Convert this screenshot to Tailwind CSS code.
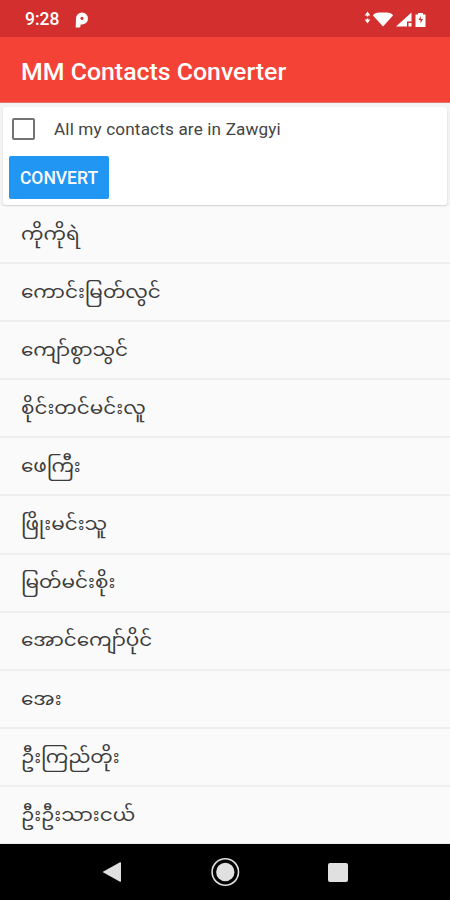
<!DOCTYPE html>
<html lang="my">
<head>
  <meta charset="UTF-8">
  <meta name="viewport" content="width=device-width, initial-scale=1.0">
  <title>MM Contacts Converter</title>
  <script src="https://cdn.jsdelivr.net/npm/@tailwindcss/browser@4"></script>
</head>
<body class="bg-[#fafafa] h-[900px] flex flex-col overflow-hidden font-['Roboto','Noto_Sans_Myanmar','Noto_Sans',sans-serif]">
  <!-- status bar -->
  <div class="h-[37px] shrink-0 bg-[#d32f2f] flex items-center pl-[25px] pr-[23px] text-white">
    <span class="text-[17.5px] font-medium leading-none pt-[3px]">9:28</span>
    <svg class="ml-[16px] mt-[2px]" width="14" height="16" viewBox="0 0 14 16">
      <path fill="#fff" fill-rule="evenodd" d="M1 6.500A6 6 0 0 1 7 .5a6 6 0 0 1 0 12H5.500V14a1.500 1.500 0 0 1-1.500 1.500H.7zM7 4.700a1.600 1.600 0 1 0 0 3.200 1.600 1.600 0 0 0 0-3.200z"/>
    </svg>
    <svg class="ml-auto mt-px" width="64" height="18" viewBox="0 0 64 18">
      <g fill="#fff">
        <path d="M4.500 1.500l2.800 4H5.200v1H3.800v-1H1.700zM4.500 13.500l-2.800-4h2.100v-1h1.400v1h2.100z"/>
        <path d="M10 5.500C11 3 14 2.500 20 2.500s9 .5 10 3L20 16.500z"/>
        <path d="M48.500 2.500v9H44v5H33z"/>
        <path d="M45.500 13h3v3.500h-3z"/>
        <path fill-rule="evenodd" d="M52.500 4.500h2.500V3h5v1.500h2.500V17h-10zM57.800 6L55.500 10h2v3.500L60 9h-2.200z"/>
      </g>
    </svg>
  </div>

  <!-- app bar -->
  <div class="h-[66px] shrink-0 bg-[#f44336] border-b border-[#e57368] flex items-center pl-[21px] pt-[4px]">
    <h1 class="text-[24px] font-medium text-white leading-none origin-left scale-x-[1.036]">MM Contacts Converter</h1>
  </div>

  <!-- options card -->
  <div class="h-[103px] shrink-0 pt-[4px] pb-px px-[3px] bg-[#f4f4f4]">
    <div class="h-[98px] bg-white rounded-[3px] shadow-[0_1px_2px_rgba(0,0,0,0.15)] pl-[6px] pt-[10px]">
      <label class="flex items-center h-[23px] pl-[3px]">
        <span class="w-[23px] h-[22px] border-2 border-[#737373] rounded-[2px]"></span>
        <span class="ml-[19px] mt-[3px] text-[16.500px] tracking-[0.15px] text-[#444] leading-none origin-left scale-x-[1.038]">All my contacts are in Zawgyi</span>
      </label>
      <button class="mt-[16px] w-[100px] h-[43px] pt-[3px] bg-[#2196f3] rounded-[2px] text-white text-[17.5px] font-medium leading-none">CONVERT</button>
    </div>
  </div>

  <!-- contacts -->
  <ul class="flex-1 min-h-0 overflow-hidden text-[18.5px] text-[#3c3c3c] leading-none *:h-[58.1px] *:pl-[20.5px] *:flex *:items-center *:border-b-2 *:border-[#eeeeee] [&_span]:origin-left [&_span]:scale-x-[1.08]">
    <li><span>ကိုကိုရဲ</span></li>
    <li><span>ကောင်းမြတ်လွင်</span></li>
    <li><span>ကျော်စွာသွင်</span></li>
    <li><span>စိုင်းတင်မင်းလူ</span></li>
    <li><span>ဖေကြီး</span></li>
    <li><span>ဖြိုးမင်းသူ</span></li>
    <li><span>မြတ်မင်းစိုး</span></li>
    <li><span>အောင်ကျော်ပိုင်</span></li>
    <li><span>အေး</span></li>
    <li><span>ဦးကြည်တိုး</span></li>
    <li><span>ဦးဦးသားငယ်</span></li>
  </ul>

  <!-- navigation bar -->
  <div class="h-[56px] shrink-0 bg-black grid grid-cols-[1fr_30px_1fr] items-center text-[#e0e0e0]">
    <svg class="ml-[102px]" width="20" height="22" viewBox="0 0 20 22"><path fill="currentColor" d="M.5 11L18 1.300a.8.8 0 0 1 1 .8v17.800a.8.8 0 0 1-1 .8z"/></svg>
    <svg width="30" height="30" viewBox="0 0 30 30">
      <circle cx="15.300" cy="15" r="9.200" fill="currentColor"/>
      <circle cx="15.300" cy="15" r="13.200" fill="none" stroke="currentColor" stroke-width="1.600"/>
    </svg>
    <span class="ml-[88px] w-[20px] h-[19px] rounded-[2px] bg-[#e0e0e0]"></span>
  </div>
</body>
</html>
